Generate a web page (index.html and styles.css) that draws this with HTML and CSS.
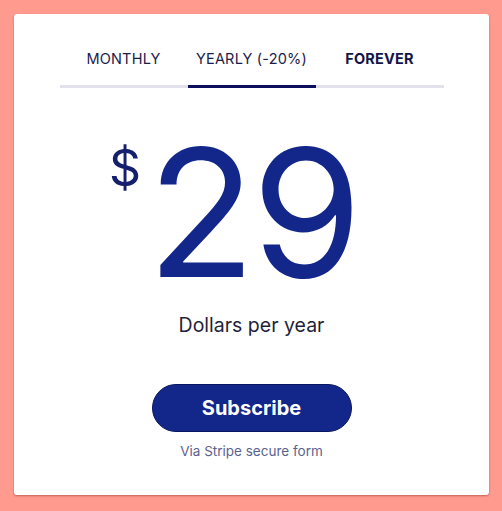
FILE: index.html
```html
<!DOCTYPE html>
<html>
<head>
<meta charset="utf-8">
<link rel="stylesheet" href="styles.css">
</head>
<body>
<div class="card">
  <div class="tabs">
    <div class="tab">MONTHLY</div>
    <div class="tab active">YEARLY (-20%)</div>
    <div class="tab bold">FOREVER</div>
  </div>
  <div class="price">
    <span class="currency">$</span><span class="amount">29</span>
  </div>
  <div class="period">Dollars per year</div>
  <button class="subscribe">Subscribe</button>
  <div class="note">Via Stripe secure form</div>
</div>
</body>
</html>
```
FILE: styles.css
```css
html, body {
  margin: 0;
  padding: 0;
}
body {
  background: #ff9a8f;
  font-family: Inter, "Noto Sans", sans-serif;
  padding: 14px 13px 16px 14px;
  height: 511px;
  box-sizing: border-box;
}
.card {
  background: #fff;
  border-radius: 3px;
  height: 481px;
  box-shadow: 0 1px 2px rgba(160, 60, 50, 0.6);
  display: flex;
  flex-direction: column;
  align-items: center;
  padding-top: 36px;
  box-sizing: border-box;
}
.tabs {
  display: flex;
  width: 384px;
}
.tab {
  flex: 1;
  text-align: center;
  font-size: 14.5px;
  color: #1b1d4a;
  letter-spacing: 0.2px;
  padding-bottom: 18px;
  border-bottom: 3px solid #e2e1ec;
  line-height: 17px;
}
.tab.active {
  border-bottom-color: #0c0f5e;
}
.tab.bold {
  font-weight: 700;
  color: #12144a;
}
.price {
  display: flex;
  align-items: flex-start;
  margin-top: 50px;
  color: #13278a;
  margin-right: 36px;
}
.currency {
  font-size: 50px;
  line-height: 1;
  margin-top: 5px;
  margin-right: 6px;
  color: #14206e;
}
.amount {
  font-size: 178px;
  line-height: 150px;
  letter-spacing: -4px;
}
.period {
  margin-top: 25px;
  font-size: 19.5px;
  color: #1f1f3a;
}
.subscribe {
  margin-top: 47px;
  width: 200px;
  height: 48px;
  border-radius: 24px;
  border: 1px solid #0a1660;
  background: #13278a;
  color: #fff;
  font-family: Inter, "Noto Sans", sans-serif;
  font-weight: 700;
  font-size: 20px;
}
.note {
  margin-top: 11px;
  font-size: 13.5px;
  color: #5a6390;
}
```
